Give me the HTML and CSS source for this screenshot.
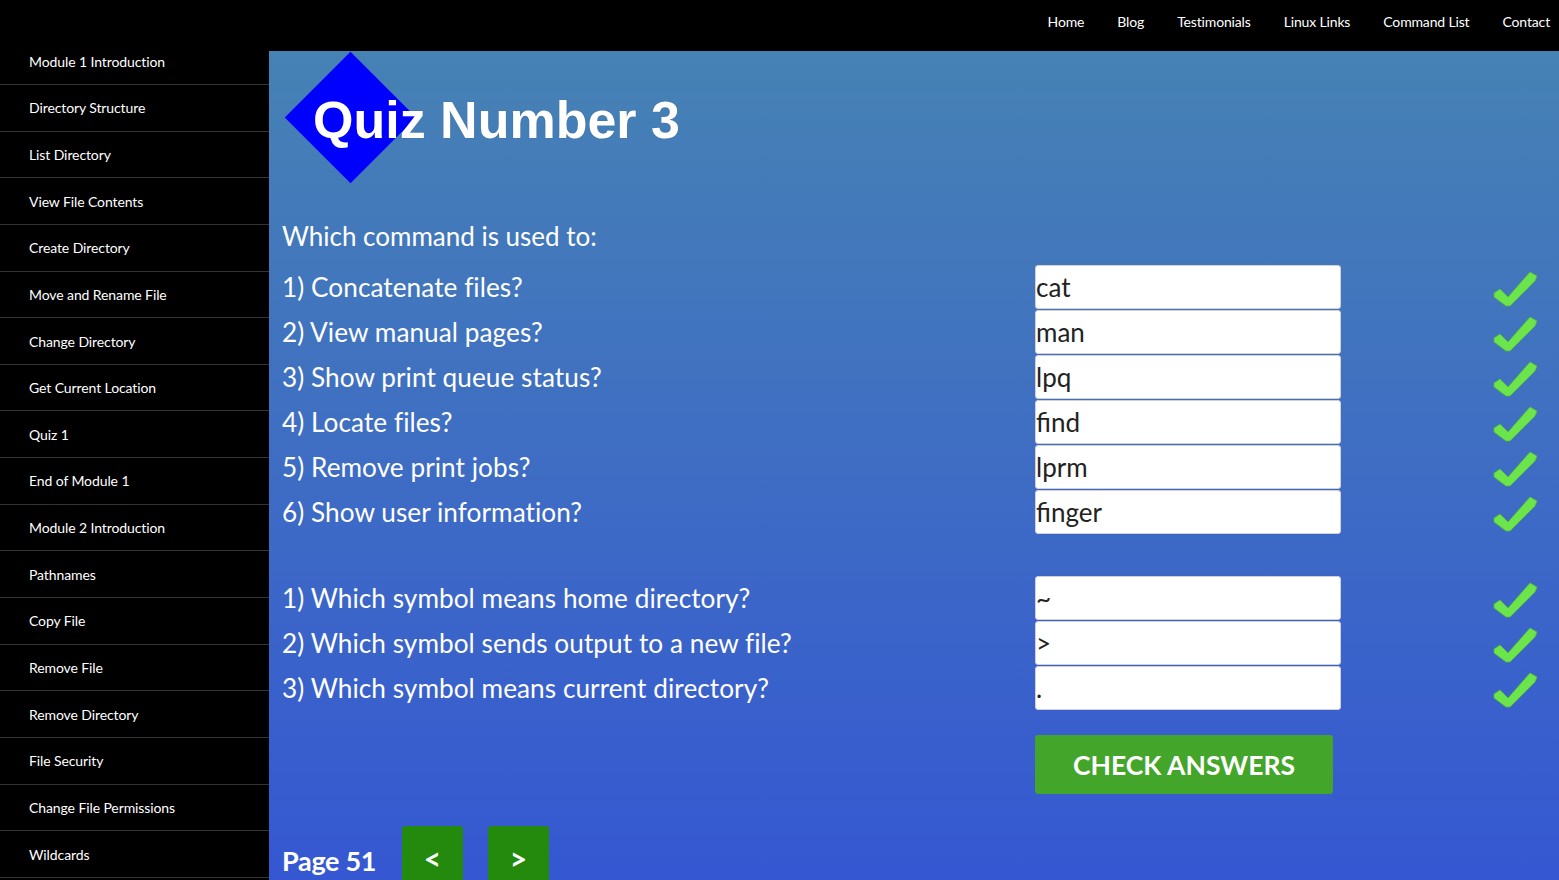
FILE: index.html
```html
<!DOCTYPE html>
<html lang="en">
<head>
<meta charset="utf-8">
<title>Quiz Number 3</title>
<link rel="stylesheet" href="styles.css">
</head>
<body>
<header class="topbar">
  <nav class="topnav">
    <a href="#">Home</a>
    <a href="#">Blog</a>
    <a href="#">Testimonials</a>
    <a href="#">Linux Links</a>
    <a href="#">Command List</a>
    <a href="#">Contact</a>
  </nav>
</header>
<div class="layout">
  <aside class="sidebar">
    <ul class="side-list">
      <li class="side-item">Module 1 Introduction</li>
      <li class="side-item">Directory Structure</li>
      <li class="side-item">List Directory</li>
      <li class="side-item">View File Contents</li>
      <li class="side-item">Create Directory</li>
      <li class="side-item">Move and Rename File</li>
      <li class="side-item">Change Directory</li>
      <li class="side-item">Get Current Location</li>
      <li class="side-item">Quiz 1</li>
      <li class="side-item">End of Module 1</li>
      <li class="side-item">Module 2 Introduction</li>
      <li class="side-item">Pathnames</li>
      <li class="side-item">Copy File</li>
      <li class="side-item">Remove File</li>
      <li class="side-item">Remove Directory</li>
      <li class="side-item">File Security</li>
      <li class="side-item">Change File Permissions</li>
      <li class="side-item">Wildcards</li>
    </ul>
  </aside>
  <main class="main">
    <div class="title-block">
      <div class="diamond"></div>
      <h1 class="title">Quiz Number 3</h1>
    </div>
    <p class="intro">Which command is used to:</p>
    <div class="qgroup">
      <div class="qrow"><span class="qtext">1) Concatenate files?</span><input class="answer" type="text" value="cat"><svg class="tick" viewBox="0 0 50 42"><polygon points="4,25 10,21 18,29 40,4 47,8 45,13 20,38 16,38 4,29"/></svg></div>
      <div class="qrow"><span class="qtext">2) View manual pages?</span><input class="answer" type="text" value="man"><svg class="tick" viewBox="0 0 50 42"><polygon points="4,25 10,21 18,29 40,4 47,8 45,13 20,38 16,38 4,29"/></svg></div>
      <div class="qrow"><span class="qtext">3) Show print queue status?</span><input class="answer" type="text" value="lpq"><svg class="tick" viewBox="0 0 50 42"><polygon points="4,25 10,21 18,29 40,4 47,8 45,13 20,38 16,38 4,29"/></svg></div>
      <div class="qrow"><span class="qtext">4) Locate files?</span><input class="answer" type="text" value="find"><svg class="tick" viewBox="0 0 50 42"><polygon points="4,25 10,21 18,29 40,4 47,8 45,13 20,38 16,38 4,29"/></svg></div>
      <div class="qrow"><span class="qtext">5) Remove print jobs?</span><input class="answer" type="text" value="lprm"><svg class="tick" viewBox="0 0 50 42"><polygon points="4,25 10,21 18,29 40,4 47,8 45,13 20,38 16,38 4,29"/></svg></div>
      <div class="qrow"><span class="qtext">6) Show user information?</span><input class="answer" type="text" value="finger"><svg class="tick" viewBox="0 0 50 42"><polygon points="4,25 10,21 18,29 40,4 47,8 45,13 20,38 16,38 4,29"/></svg></div>
    </div>
    <div class="qgroup second">
      <div class="qrow"><span class="qtext">1) Which symbol means home directory?</span><input class="answer" type="text" value="~"><svg class="tick" viewBox="0 0 50 42"><polygon points="4,25 10,21 18,29 40,4 47,8 45,13 20,38 16,38 4,29"/></svg></div>
      <div class="qrow"><span class="qtext">2) Which symbol sends output to a new file?</span><input class="answer" type="text" value="&gt;"><svg class="tick" viewBox="0 0 50 42"><polygon points="4,25 10,21 18,29 40,4 47,8 45,13 20,38 16,38 4,29"/></svg></div>
      <div class="qrow"><span class="qtext">3) Which symbol means current directory?</span><input class="answer" type="text" value="."><svg class="tick" viewBox="0 0 50 42"><polygon points="4,25 10,21 18,29 40,4 47,8 45,13 20,38 16,38 4,29"/></svg></div>
    </div>
    <div class="check-row">
      <button class="check-btn" type="button">CHECK ANSWERS</button>
    </div>
    <div class="pager">
      <span class="page-label">Page 51</span>
      <a class="page-btn" href="#">&lt;</a>
      <a class="page-btn" href="#">&gt;</a>
    </div>
  </main>
</div>
</body>
</html>
```
FILE: styles.css
```css
* { box-sizing: border-box; }
html, body { margin: 0; padding: 0; }
body {
  width: 1559px;
  height: 880px;
  overflow: hidden;
  background: #000;
  font-family: Lato, "Open Sans", sans-serif;
  color: #fff;
}
.topbar {
  height: 51px;
  background: #000;
  display: flex;
  justify-content: flex-end;
  position: relative;
  z-index: 2;
}
.topnav {
  display: flex;
  gap: 33px;
  padding-right: 9px;
  padding-top: 13px;
}
.topnav a {
  color: #fff;
  text-decoration: none;
  font-size: 14px;
  line-height: 18px;
  letter-spacing: -0.15px;
}
.layout {
  display: flex;
  height: 829px;
}
.sidebar {
  width: 269px;
  flex: none;
  background: #000;
  overflow: hidden;
}
.side-list {
  list-style: none;
  margin: -12.65px 0 0 0;
  padding: 0;
}
.side-item {
  height: 46.65px;
  border-bottom: 1px solid #333;
  display: flex;
  align-items: center;
  padding-left: 29px;
  font-size: 14px;
  letter-spacing: -0.1px;
  color: #fff;
}
.main {
  flex: 1;
  background: linear-gradient(to bottom, #4682b4 0%, #3f6fc2 45%, #3557d2 100%);
  padding-left: 13px;
  overflow: hidden;
}
.title-block {
  position: relative;
  height: 150px;
  padding-top: 39px;
}
.diamond {
  position: absolute;
  left: 21.5px;
  top: 19.5px;
  width: 93px;
  height: 93px;
  background: #0000ff;
  transform: rotate(45deg);
}
.title {
  position: relative;
  margin: 0;
  padding-left: 31px;
  font-family: "Liberation Sans", Arial, sans-serif;
  font-weight: bold;
  font-size: 52px;
  line-height: 60px;
  color: #fff;
  text-shadow: 0 0 1px rgba(0,0,0,0.25);
}
.intro {
  margin: 20px 0 13px 0;
  font-size: 26px;
  line-height: 30px;
}
.qgroup {
  display: flex;
  flex-direction: column;
  gap: 1px;
}
.qgroup.second { margin-top: 42px; }
.qrow {
  display: grid;
  grid-template-columns: 753px 306px 1fr;
  align-items: center;
  height: 44px;
}
.qtext {
  font-size: 26.2px;
  line-height: 30px;
  letter-spacing: 0.05px;
}
.answer {
  width: 306px;
  height: 44px;
  border: 1px solid #d0d0d8;
  border-radius: 3px;
  background: #fff;
  padding: 0 0 0 0;
  font-family: Lato, "Open Sans", sans-serif;
  font-size: 26px;
  color: #222;
  outline: none;
}
.tick {
  width: 50px;
  height: 42px;
  margin-left: 149px;
  margin-top: 4px;
}
.tick polygon {
  fill: #6ce44c;
  stroke: #55b83a;
  stroke-width: 0.8;
  stroke-linejoin: round;
}
.check-row {
  margin-top: 26px;
  padding-left: 753px;
}
.check-btn {
  width: 298px;
  height: 59px;
  background: #43a52a;
  border: none;
  border-radius: 3px;
  color: #fff;
  font-family: Lato, "Open Sans", sans-serif;
  font-weight: bold;
  font-size: 26.5px;
  padding: 0;
}
.pager {
  margin-top: 32px;
  display: flex;
  align-items: flex-start;
}
.page-label {
  font-weight: bold;
  font-size: 27px;
  line-height: 32px;
  margin-top: 19px;
  letter-spacing: -0.3px;
  width: 120px;
}
.page-btn {
  width: 61px;
  height: 60px;
  background: #248a0e;
  border-radius: 3px;
  color: #fff;
  text-decoration: none;
  font-weight: bold;
  font-size: 30px;
  display: flex;
  justify-content: center;
  padding-top: 14px;
  margin-right: 25px;
}
```
